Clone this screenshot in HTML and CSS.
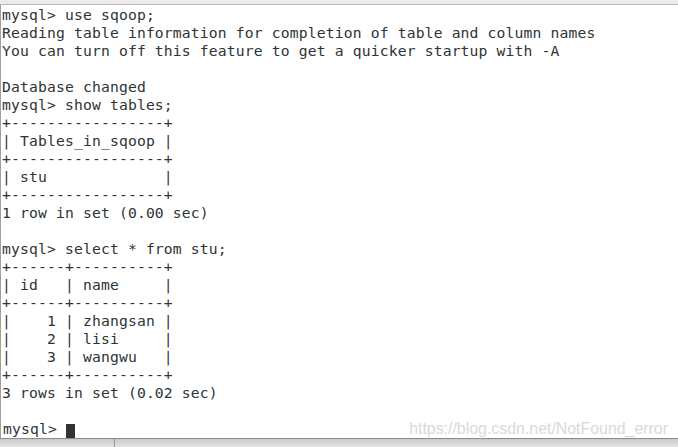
FILE: index.html
```html
<!DOCTYPE html>
<html>
<head>
<meta charset="utf-8">
<link rel="stylesheet" href="styles.css">
</head>
<body>
<div class="window">
  <div class="topstrip"></div>
  <div class="term">
<pre class="out">mysql&gt; use sqoop;
Reading table information for completion of table and column names
You can turn off this feature to get a quicker startup with -A

Database changed
mysql&gt; show tables;
+-----------------+
| Tables_in_sqoop |
+-----------------+
| stu             |
+-----------------+
1 row in set (0.00 sec)

mysql&gt; select * from stu;
+------+----------+
| id   | name     |
+------+----------+
|    1 | zhangsan |
|    2 | lisi     |
|    3 | wangwu   |
+------+----------+
3 rows in set (0.02 sec)
</pre>
    <div class="blank"></div>
    <div class="lastline">
      <span class="prompt">mysql&gt; <span class="cursor"> </span></span>
      <span class="watermark">https://blog.csdn.net/NotFound_error</span>
    </div>
  </div>
  <div class="bottombar">
    <div class="seg first"></div>
    <div class="seg"></div>
  </div>
</div>
</body>
</html>
```
FILE: styles.css
```css
html, body {
  margin: 0;
  padding: 0;
  width: 678px;
  height: 447px;
  overflow: hidden;
  background: #ffffff;
}
.window {
  display: flex;
  flex-direction: column;
  width: 678px;
  height: 447px;
}
.topstrip {
  height: 4px;
  background: #ebebeb;
  border-bottom: 1px solid #b8b8b8;
  flex: none;
}
.term {
  flex: 1;
  display: flex;
  flex-direction: column;
  background: #ffffff;
  border-left: 1px solid #a0a0a0;
  overflow: hidden;
  padding-top: 1px;
}
.out, .prompt {
  margin: 0;
  font-family: "DejaVu Sans Mono", monospace;
  font-size: 14.7px;
  letter-spacing: 0.15px;
  line-height: 18px;
  color: #2e3436;
  white-space: pre;
}
.out {
  padding: 0 0 0 1px;
}
.blank {
  height: 18px;
  flex: none;
}
.lastline {
  display: flex;
  justify-content: space-between;
  align-items: baseline;
  padding-left: 2px;
  padding-right: 10px;
  height: 18px;
  flex: none;
}
.cursor {
  display: inline-block;
  width: 9px;
  height: 17px;
  background: #2e3436;
  vertical-align: -4px;
}
.watermark {
  font-family: "Liberation Sans", Arial, sans-serif;
  font-size: 15.9px;
  line-height: 18px;
  color: #d9d9d9;
}
.bottombar {
  flex: none;
  height: 8px;
  border-top: 1px solid #8c8c8c;
  background: linear-gradient(#c8c8c8, #e4e4e4);
  display: flex;
}
.seg {
  flex: 1;
}
.seg.first {
  flex: none;
  width: 114px;
  border-right: 1px solid #9a9a9a;
}
```
